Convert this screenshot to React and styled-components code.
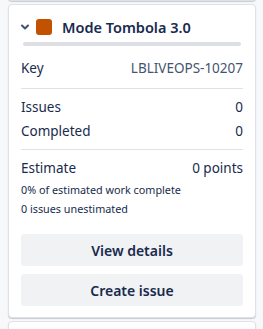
import React from "react";
import styled, { createGlobalStyle } from "styled-components";

const GlobalStyle = createGlobalStyle`
  html, body {
    margin: 0;
    padding: 0;
    background: #f7f8f9;
    overflow: hidden;
  }
  body {
    font-family: "Noto Sans", "Open Sans", sans-serif;
    color: #172b4d;
  }
`;

const Panel = styled.div`
  display: flex;
  flex-direction: column;
  gap: 3px;
  padding: 0 7px 0 8px;
  margin-top: -41px;
`;

const Card = styled.section`
  box-sizing: border-box;
  width: 248px;
  background: #ffffff;
  border: 1px solid #dfe1e6;
  border-radius: 4px;
  box-shadow: 0 1px 1px rgba(9, 30, 66, 0.2);
  padding: ${(p) => (p.$empty ? "0" : "12px 12px 11px")};
  height: ${(p) => (p.$empty ? "42px" : "auto")};
`;

const Header = styled.div`
  display: flex;
  align-items: center;
  height: 20px;
`;

const Chevron = styled.span`
  display: flex;
  width: 16px;
  margin-left: -4px;
  margin-right: 1px;
  margin-top: -1px;
  color: #42526e;
`;

const Swatch = styled.span`
  width: 16px;
  height: 16px;
  border-radius: 3px;
  background: #c25100;
  margin-left: 2px;
`;

const Title = styled.h2`
  margin: 0 0 0 10px;
  font-size: 14.5px;
  font-weight: 600;
  line-height: 20px;
  color: #172b4d;
`;

const Progress = styled.div`
  height: 4px;
  border-radius: 2px;
  background: #dcdfe4;
  margin: 5px 2px 0;
`;

const Section = styled.div`
  padding: ${(p) => p.$pad};
  border-bottom: ${(p) => (p.$line ? "1px solid #dfe1e6" : "none")};
`;

const Row = styled.div`
  display: flex;
  justify-content: space-between;
  align-items: center;
  height: ${(p) => p.$h || "24px"};
  font-size: 13.5px;
`;

const Label = styled.span`
  color: #172b4d;
`;

const Value = styled.span`
  color: ${(p) => (p.$muted ? "#44546f" : "#172b4d")};
`;

const Note = styled.div`
  font-size: 10.8px;
  line-height: 19px;
  color: #172b4d;
`;

const Actions = styled.div`
  display: flex;
  flex-direction: column;
  gap: 8px;
  margin-top: 16px;
`;

const Button = styled.button`
  height: 32px;
  border: none;
  border-radius: 3px;
  background: #f1f2f4;
  color: #172b4d;
  font-family: inherit;
  font-size: 14px;
  font-weight: 600;
  cursor: pointer;
  &:hover {
    background: #dcdfe4;
  }
`;

const ChevronDown = () => (
  <svg width="16" height="16" viewBox="0 0 16 16" fill="none">
    <path
      d="M5 6.5l3 3 3-3"
      stroke="currentColor"
      strokeWidth="2"
      strokeLinecap="round"
      strokeLinejoin="round"
    />
  </svg>
);

export default function App() {
  return (
    <>
      <GlobalStyle />
      <Panel>
        <Card $empty />
        <Card>
          <Header>
            <Chevron>
              <ChevronDown />
            </Chevron>
            <Swatch />
            <Title>Mode Tombola 3.0</Title>
          </Header>
          <Progress />
          <Section $line $pad="10px 0 8px">
            <Row>
              <Label>Key</Label>
              <Value $muted>LBLIVEOPS-10207</Value>
            </Row>
          </Section>
          <Section $line $pad="6px 0 6px">
            <Row>
              <Label>Issues</Label>
              <Value>0</Value>
            </Row>
            <Row>
              <Label>Completed</Label>
              <Value>0</Value>
            </Row>
          </Section>
          <Section $pad="6px 0 0">
            <Row $h="24px">
              <Label>Estimate</Label>
              <Value>0 points</Value>
            </Row>
            <Note>0% of estimated work complete</Note>
            <Note>0 issues unestimated</Note>
          </Section>
          <Actions>
            <Button type="button">View details</Button>
            <Button type="button">Create issue</Button>
          </Actions>
        </Card>
        <Card $empty />
      </Panel>
    </>
  );
}
